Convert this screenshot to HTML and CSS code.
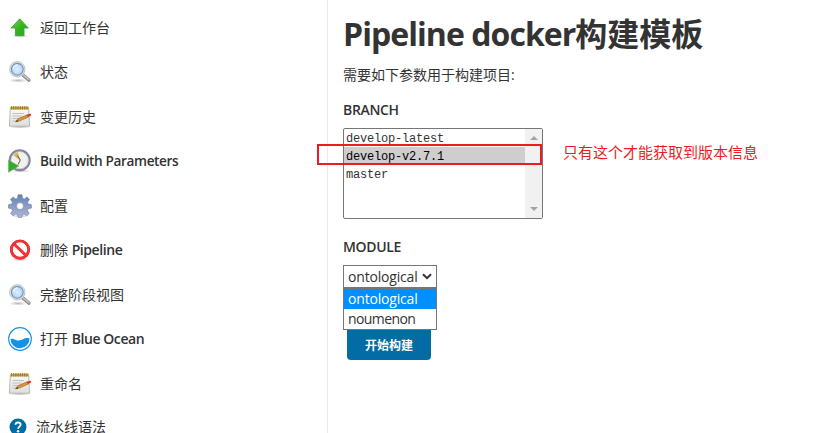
FILE: index.html
```html
<!DOCTYPE html>
<html lang="zh-CN">
<head>
<meta charset="utf-8">
<title>Pipeline docker构建模板</title>
<link rel="stylesheet" href="styles.css">
</head>
<body>
<svg class="defs" width="0" height="0" aria-hidden="true">
  <defs>
    <linearGradient id="green" x1="0" y1="0" x2="1" y2="1"><stop offset="0" stop-color="#7bd84e"/><stop offset=".5" stop-color="#35b51f"/><stop offset="1" stop-color="#21a51b"/></linearGradient>
    <linearGradient id="paper" x1="0" y1="0" x2="0" y2="1"><stop offset="0" stop-color="#fafafa"/><stop offset="1" stop-color="#dededc"/></linearGradient>
    <linearGradient id="steel" x1="0" y1="0" x2="0" y2="1"><stop offset="0" stop-color="#6484b2"/><stop offset="1" stop-color="#b1b5d6"/></linearGradient>
    <radialGradient id="lens"><stop offset="0" stop-color="#e1effb"/><stop offset="1" stop-color="#b5d3f0"/></radialGradient>
    <radialGradient id="shade"><stop offset="0" stop-color="#000" stop-opacity=".28"/><stop offset="1" stop-color="#000" stop-opacity="0"/></radialGradient>
    <symbol id="search" viewBox="0 0 24 24">
      <ellipse cx="10" cy="20.5" rx="9" ry="2" fill="url(#shade)"/>
      <path d="M15 15 20.8 20" stroke="#858585" stroke-width="3.6" stroke-linecap="round"/>
      <path d="M15 14.6 20.8 19.6" stroke="#c4c4c4" stroke-width="1.8" stroke-linecap="round"/>
      <circle cx="9.3" cy="9.3" r="7.7" fill="#e8e8e6" stroke="#b4b4b4" stroke-width=".8"/>
      <circle cx="9.3" cy="9.3" r="5.9" fill="url(#lens)" stroke="#6b93c4" stroke-width="1.1"/>
      <path d="M5.5 9a4 4 0 0 1 4-4" fill="none" stroke="#fff" stroke-opacity=".7" stroke-width="1.3"/>
    </symbol>
    <symbol id="notepad" viewBox="0 0 24 24">
      <ellipse cx="12" cy="22" rx="11" ry="1.5" fill="url(#shade)"/>
      <path d="M2.3 3h18.4l.9 18.2H1.4z" fill="url(#paper)" stroke="#a9a9a5" stroke-width=".8"/>
      <path d="M2.5 1.7h18.2v2.8H2.5z" fill="#c6a63e"/>
      <path d="M3.5 1v3.5M5.7 1v3.5M7.9 1v3.5M10.1 1v3.5M12.3 1v3.5M14.5 1v3.5M16.7 1v3.5M18.9 1v3.5" stroke="#8a7018" stroke-width=".8"/>
      <path d="M4.5 8.5H16M4.5 11h9M4.5 13.5h6M4.5 16h4" stroke="#bbb" stroke-width=".9"/>
      <path d="m7.6 16.9 2.7-3.4 9.5-3.9 1.1 2.2-9.5 4.3z" fill="#dc9439" stroke="#9b5c1c" stroke-width=".6"/>
      <path d="m7.3 17 2-2.2.9 1.5z" fill="#493a2a"/>
      <path d="m18.9 10 2.8-1.3c1.3-.4 2 1.5.8 2.1L20 12z" fill="#e03423"/>
    </symbol>
  </defs>
</svg>

<div class="page">
  <nav class="tasks">
    <a class="task">
      <svg class="icon" viewBox="0 0 24 24"><ellipse cx="12" cy="20" rx="9" ry="1.6" fill="url(#shade)"/><path d="m11.7 2.8 8.5 9.2H16v7.6H7.4V12H3.2z" fill="url(#green)" stroke="#3f9e35" stroke-width=".9" stroke-linejoin="round"/></svg>
      <span>返回工作台</span>
    </a>
    <a class="task"><svg class="icon"><use href="#search"/></svg><span>状态</span></a>
    <a class="task"><svg class="icon"><use href="#notepad"/></svg><span>变更历史</span></a>
    <a class="task">
      <svg class="icon" viewBox="0 0 24 24"><ellipse cx="13" cy="22" rx="9" ry="1.5" fill="url(#shade)"/><circle cx="11.7" cy="11.2" r="9.9" fill="#f2f2ed" stroke="#85859f" stroke-width="2.2"/><circle cx="11.7" cy="11.2" r="8.6" fill="none" stroke="#c8c8d0" stroke-width=".7"/><path d="M11.5 11.2 5.6 6.2A8 8 0 0 1 10 3.3z" fill="#d9b64d"/><path d="M9.5 6.5 12.3 11l-2.2 4.5" fill="none" stroke="#555" stroke-width="1"/><path d="M.5 11.3 10.8 17 .5 23.3z" fill="#35a82f" stroke="#65b95d" stroke-width=".6"/></svg>
      <span class="latin build">Build with Parameters</span>
    </a>
    <a class="task">
      <svg class="icon" viewBox="0 0 24 24"><ellipse cx="12" cy="22" rx="9" ry="1.6" fill="url(#shade)"/><path fill="url(#steel)" stroke="#687ca9" stroke-width=".6" stroke-linejoin="round" fill-rule="evenodd" d="M10 .8h4l.5 3.4 1.8.8L19 2.9l2.5 2.5-2 2.9.7 1.8 3.2.6v3.4l-3.2.7-.8 1.8 1.9 2.8-2.5 2.4-2.7-1.9-1.8.8-.7 2.9h-3.3l-.7-2.9-1.8-.8L5 21.8l-2.4-2.4 1.9-2.8-.8-1.8-3.2-.7v-3.4l3.2-.6.8-1.8-2-2.9L5 2.9 7.8 5l1.8-.8zM12 8.6a3.5 3.5 0 1 0 0 7 3.5 3.5 0 0 0 0-7z"/></svg>
      <span>配置</span>
    </a>
    <a class="task">
      <svg class="icon" viewBox="0 0 24 24"><ellipse cx="12" cy="21.4" rx="9" ry="1.8" fill="url(#shade)"/><circle cx="12" cy="11.6" r="8.7" fill="#fff" stroke="#d92828" stroke-width="2.9"/><path d="m6 6 12 11.5" stroke="#d92828" stroke-width="2.9"/><circle cx="12" cy="11.6" r="8.7" fill="none" stroke="#f63438" stroke-width="1.9"/><path d="m6 6 12 11.5" stroke="#f63438" stroke-width="1.9"/></svg>
      <span>删除 <b class="latin">Pipeline</b></span>
    </a>
    <a class="task"><svg class="icon"><use href="#search"/></svg><span>完整阶段视图</span></a>
    <a class="task">
      <svg class="icon" viewBox="0 0 24 24"><circle cx="12" cy="12" r="11.3" fill="#fff" stroke="#1791e5" stroke-width="1.2"/><path d="M2.5 12c2.8-.8 5 1.8 8.3 1.5 3.8-.3 6-3.5 10.7-2.1a9.5 9.5 0 0 1-19 .6z" fill="#1791e5"/></svg>
      <span>打开 <b class="latin">Blue Ocean</b></span>
    </a>
    <a class="task"><svg class="icon"><use href="#notepad"/></svg><span>重命名</span></a>
    <a class="task task-help">
      <svg class="icon" viewBox="0 0 20 20"><circle cx="10" cy="10" r="8.5" fill="#046ca4"/><path d="M7.5 7.8c.1-3.1 5.1-3 5.1-.1 0 1.9-2.4 2-2.5 4.2" fill="none" stroke="#fff" stroke-width="1.8"/><circle cx="10.1" cy="14.2" r="1.2" fill="#fff"/></svg>
      <span>流水线语法</span>
    </a>
  </nav>

  <main class="main">
    <h1><span class="title-latin">Pipeline docker</span>构建模板</h1>
    <p class="intro">需要如下参数用于构建项目:</p>

    <section class="parameter">
      <h2 class="branch-name">BRANCH</h2>
      <div class="listbox">
        <ul class="branches">
          <li>develop-latest</li>
          <li class="selected">develop-v2.7.1</li>
          <li>master</li>
        </ul>
        <div class="scrollbar"><i class="up"></i><i class="down"></i></div>
        <div class="highlight"></div>
        <div class="note">只有这个才能获取到版本信息</div>
      </div>
    </section>

    <section class="parameter">
      <h2 class="module-name">MODULE</h2>
      <div class="select"><span>ontological</span><svg class="chevron" viewBox="0 0 10 7"><path d="m1 1.2 4 4 4-4" fill="none" stroke="#333" stroke-width="2"/></svg></div>
      <ul class="options">
        <li class="active">ontological</li>
        <li class="noumenon">noumenon</li>
      </ul>
    </section>
    <button class="build-button">开始构建</button>
  </main>
</div>
</body>
</html>
```
FILE: styles.css
```css
* { box-sizing: border-box; }
body {
  margin: 0;
  height: 433px;
  overflow: hidden;
  background: #fff;
  color: #333;
  font: 14px/20px "Open Sans", "Noto Sans CJK SC", sans-serif;
}
.defs { position: absolute; }
.page { display: flex; height: 433px; overflow: hidden; }
h1, h2, p, ul { margin: 0; padding: 0; }
ul { list-style: none; }

.tasks { flex: 0 0 328px; padding-top: 5.5px; border-right: 1px solid #eaeaea; }
.task { display: flex; align-items: center; gap: 8px; height: 44.5px; padding-left: 8px; white-space: nowrap; }
.icon { flex: none; width: 24px; height: 24px; }
.latin { font-weight: 600; letter-spacing: -.42px; }
.build { font-size: 13.6px; letter-spacing: -.37px; }
.task-help { height: 42.5px; }
.task-help .icon { width: 20px; height: 20px; }

.main { flex: 1; padding: 12px 0 0 15px; }
h1 { font-size: 32px; line-height: 44px; font-weight: 700; white-space: nowrap; }
.title-latin { letter-spacing: -.95px; }
.intro { margin-top: 9px; }
.parameter h2 { font-size: 14px; line-height: 20px; font-weight: 600; letter-spacing: -.35px; }
.branch-name { margin-top: 15px; }

.listbox {
  position: relative;
  display: flex;
  width: 200px;
  height: 91px;
  margin-top: 8px;
  border: 1px solid #767676;
  border-radius: 2px;
}
.branches { flex: 1; font: 12px/20px "Liberation Mono", monospace; letter-spacing: -.2px; }
.branches li { height: 18px; padding-left: 2px; }
.branches .selected { background: #cecece; color: #000; }
.scrollbar { display: flex; flex-direction: column; justify-content: space-between; align-items: center; width: 17px; padding: 7px 0; background: #f1f1f1; }
.up, .down { border: 4px solid transparent; }
.up { border-top: 0; border-bottom-color: #a3a3a3; }
.down { border-bottom: 0; border-top-color: #a3a3a3; }
.highlight { position: absolute; left: -27px; top: 15px; width: 225px; height: 21px; border: 2px solid #ed1c24; }
.note { position: absolute; left: 219px; top: 13px; color: #ed1c24; font-size: 15px; white-space: nowrap; }

.module-name { margin-top: 18px; }
.select { display: flex; align-items: center; justify-content: space-between; width: 94px; height: 23px; margin-top: 8px; padding: 0 4px; border: 1px solid #767676; letter-spacing: -.18px; }
.chevron { width: 10px; height: 7px; }
.options { width: 94px; border: 1px solid #767676; letter-spacing: -.18px; }
.options li { height: 20px; padding-left: 4px; line-height: 20px; }
.options .active { background: #0090ff; color: #fff; }
.options .noumenon { letter-spacing: -.6px; }
.build-button { display: block; width: 84px; height: 30px; margin-left: 4px; padding: 0; border: 0; border-radius: 0 0 4px 4px; background: #046ca4; color: #fff; font: 700 12px/30px "Noto Sans CJK SC", sans-serif; }
```
